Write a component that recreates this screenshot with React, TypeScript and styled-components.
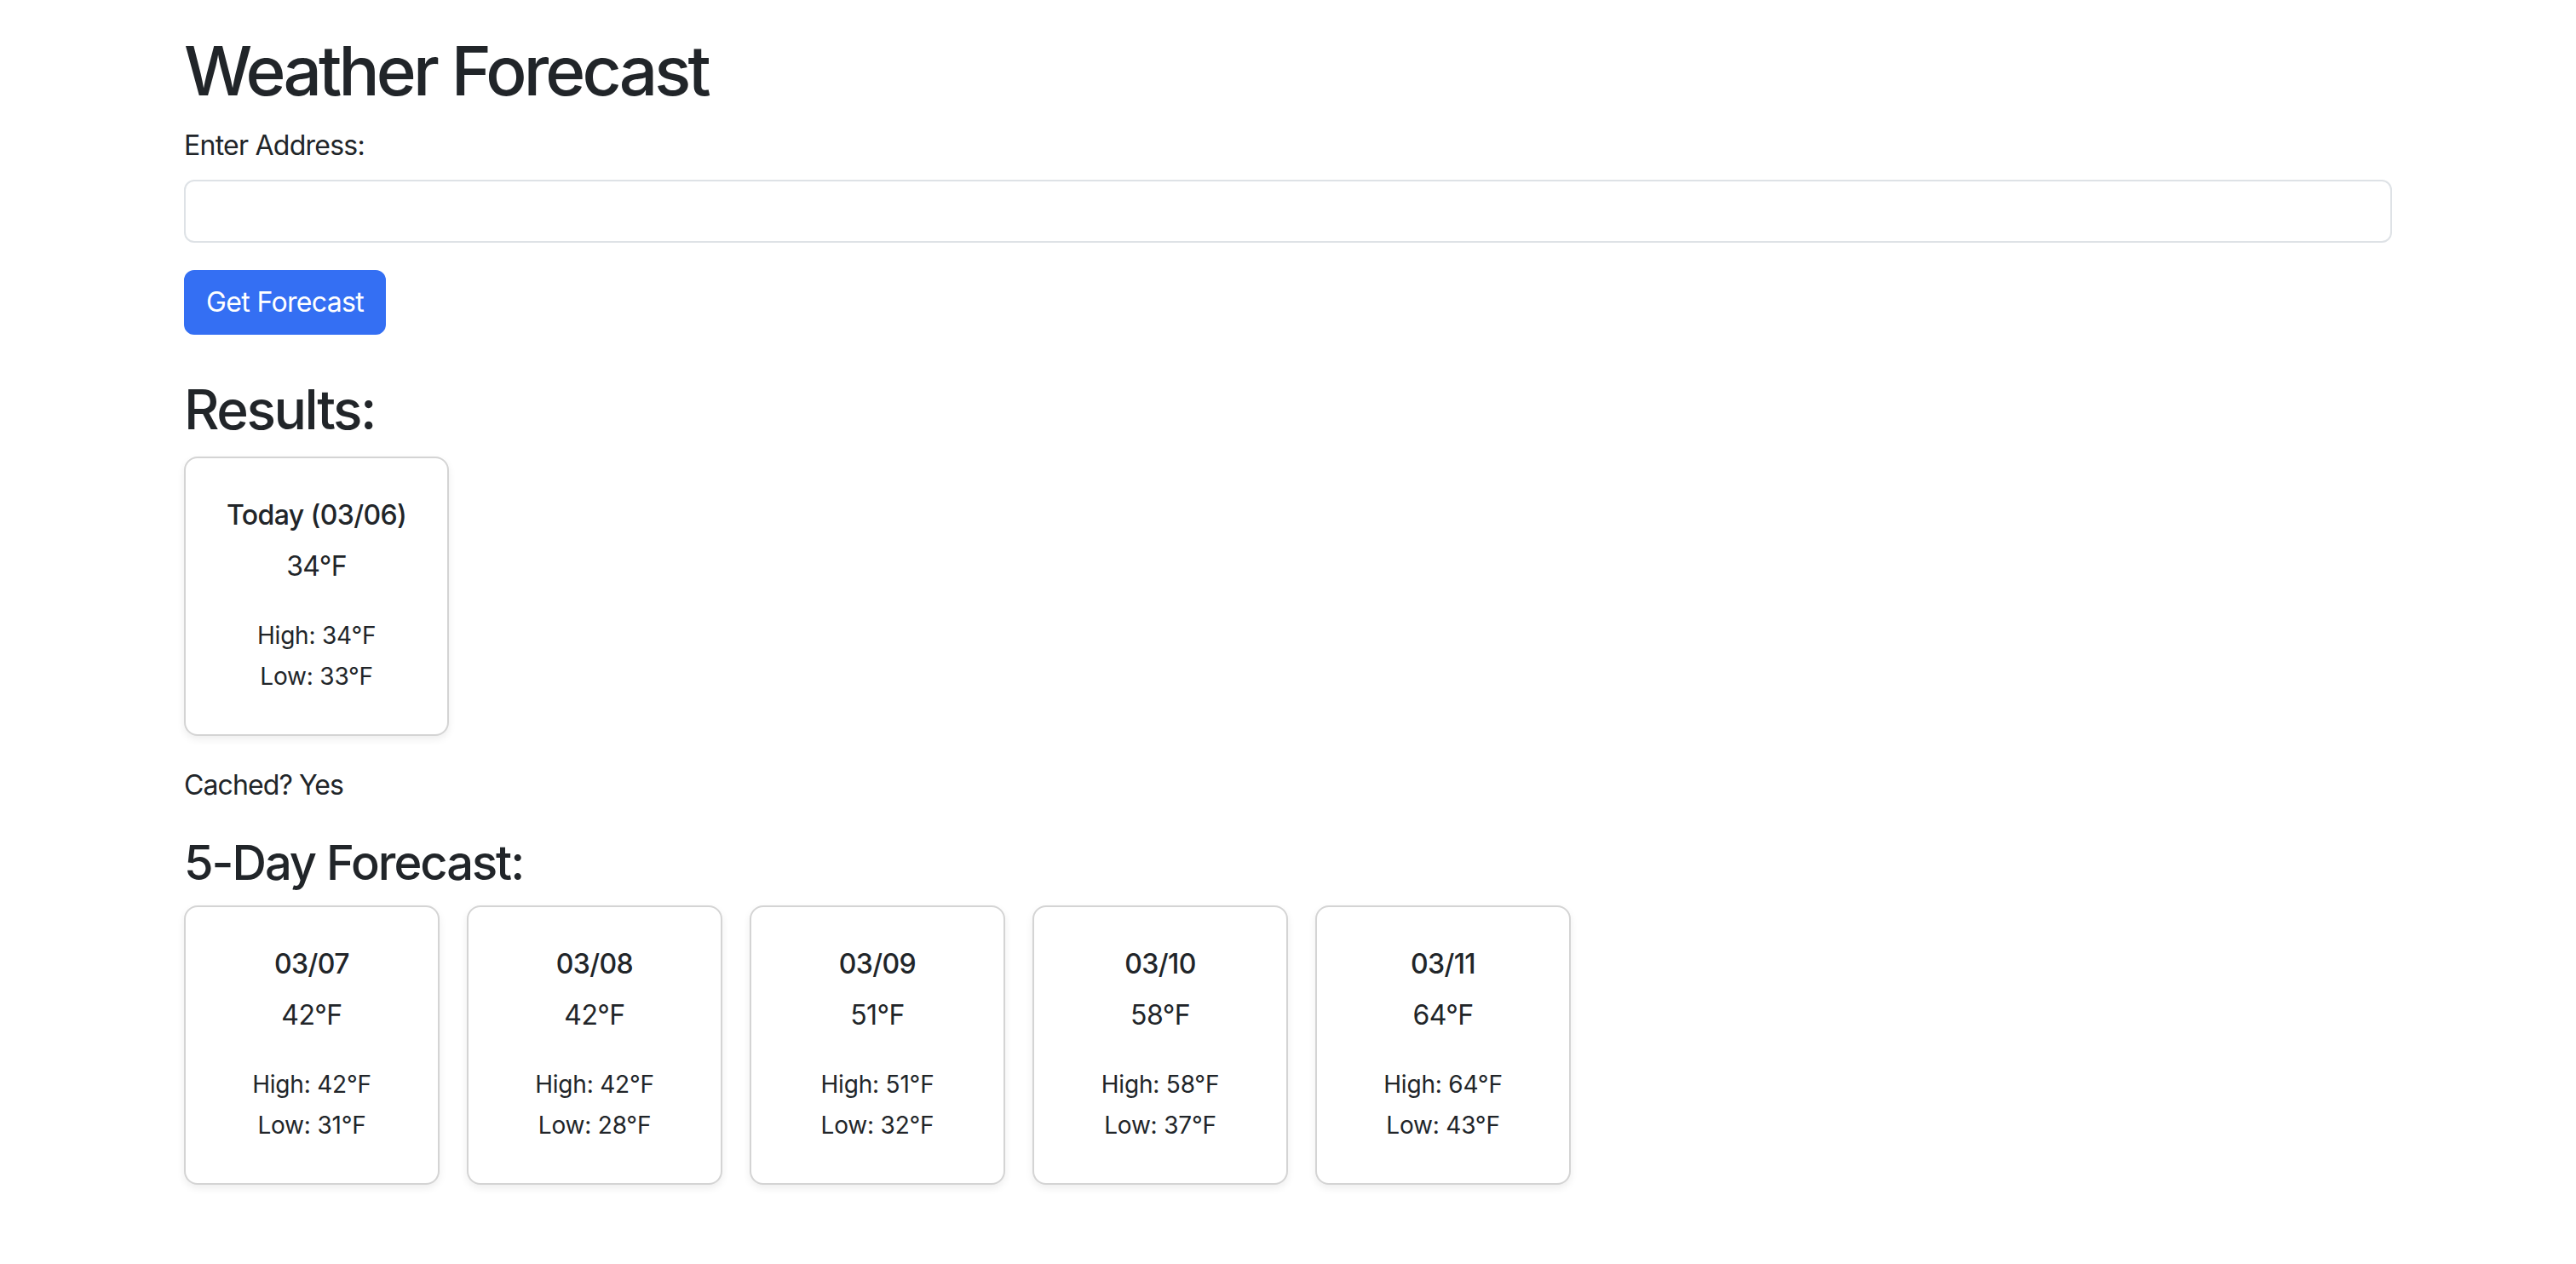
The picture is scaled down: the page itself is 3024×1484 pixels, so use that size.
import React from "react";
import styled, { createGlobalStyle } from "styled-components";

const GlobalStyle = createGlobalStyle`
  * { box-sizing: border-box; }
  body {
    margin: 0;
    background: #ffffff;
    color: #212529;
    font-family: Inter, "Liberation Sans", Arial, sans-serif;
    font-size: 32px;
    line-height: 48px;
    letter-spacing: -0.75px;
  }
`;

const Page = styled.main`
  max-width: 2640px;
  margin: 0 auto;
  padding: 35px 24px 60px;
`;

const Title = styled.h1`
  margin: 0 0 16px;
  font-size: 80px;
  line-height: 96px;
  font-weight: 500;
  letter-spacing: -3.8px;
`;

const Label = styled.label`
  display: block;
  margin: 0 0 16px;
  font-size: 32px;
  line-height: 48px;
`;

const AddressInput = styled.input`
  display: block;
  width: 100%;
  height: 74px;
  margin: 0 0 32px;
  padding: 11px 24px;
  font: inherit;
  color: #212529;
  background: #fff;
  border: 2px solid #dee2e6;
  border-radius: 12px;
  outline: none;
`;

const PrimaryButton = styled.button`
  display: inline-block;
  height: 76px;
  padding: 12px 24px;
  font: inherit;
  font-size: 32px;
  line-height: 48px;
  letter-spacing: -0.65px;
  color: #fff;
  background: #346ff3;
  border: 2px solid #346ff3;
  border-radius: 12px;
  cursor: pointer;
`;

const SectionTitle = styled.h2<{ $size: number; $top: number; $track: number }>`
  margin: ${(p) => p.$top}px 0 16px;
  font-size: ${(p) => p.$size}px;
  line-height: 1.2;
  font-weight: 500;
  letter-spacing: ${(p) => p.$track}px;
`;

const CardRow = styled.div`
  display: flex;
  flex-wrap: wrap;
  gap: 32px;
  margin-bottom: 34px;
`;

const Card = styled.div`
  min-width: 300px;
  padding: 43px 48px 44px;
  background: #fff;
  border: 2px solid #d4d4d4;
  border-radius: 16px;
  box-shadow: 0 4px 10px rgba(0, 0, 0, 0.07);
  text-align: center;
`;

const CardTitle = styled.h3`
  margin: 0 0 12px;
  font-size: 32px;
  line-height: 48px;
  font-weight: 500;
  letter-spacing: -0.6px;
  white-space: nowrap;
`;

const Temp = styled.p`
  margin: 0 0 33px;
  font-size: 32px;
  line-height: 48px;
  letter-spacing: -0.6px;
`;

const Detail = styled.p`
  margin: 0;
  font-size: 28px;
  line-height: 48px;
  letter-spacing: -0.2px;
  white-space: nowrap;
`;

const Note = styled.p`
  margin: 0 0 34px;
  font-size: 32px;
  line-height: 48px;
  letter-spacing: -0.9px;
`;

type Day = { label: string; temp: number; high: number; low: number };

const today: Day = { label: "Today (03/06)", temp: 34, high: 34, low: 33 };

const forecast: Day[] = [
  { label: "03/07", temp: 42, high: 42, low: 31 },
  { label: "03/08", temp: 42, high: 42, low: 28 },
  { label: "03/09", temp: 51, high: 51, low: 32 },
  { label: "03/10", temp: 58, high: 58, low: 37 },
  { label: "03/11", temp: 64, high: 64, low: 43 },
];

function DayCard({ day }: { day: Day }) {
  return (
    <Card>
      <CardTitle>{day.label}</CardTitle>
      <Temp>{day.temp}°F</Temp>
      <Detail>High: {day.high}°F</Detail>
      <Detail>Low: {day.low}°F</Detail>
    </Card>
  );
}

export default function App() {
  return (
    <>
      <GlobalStyle />
      <Page>
        <Title>Weather Forecast</Title>
        <Label htmlFor="address">Enter Address:</Label>
        <AddressInput id="address" type="text" />
        <PrimaryButton type="button">Get Forecast</PrimaryButton>

        <SectionTitle $size={64} $top={50} $track={-2.4}>Results:</SectionTitle>
        <CardRow>
          <DayCard day={today} />
        </CardRow>
        <Note>Cached? Yes</Note>

        <SectionTitle as="h3" $size={56} $top={0} $track={-2}>5-Day Forecast:</SectionTitle>
        <CardRow>
          {forecast.map((d) => (
            <DayCard key={d.label} day={d} />
          ))}
        </CardRow>
      </Page>
    </>
  );
}
